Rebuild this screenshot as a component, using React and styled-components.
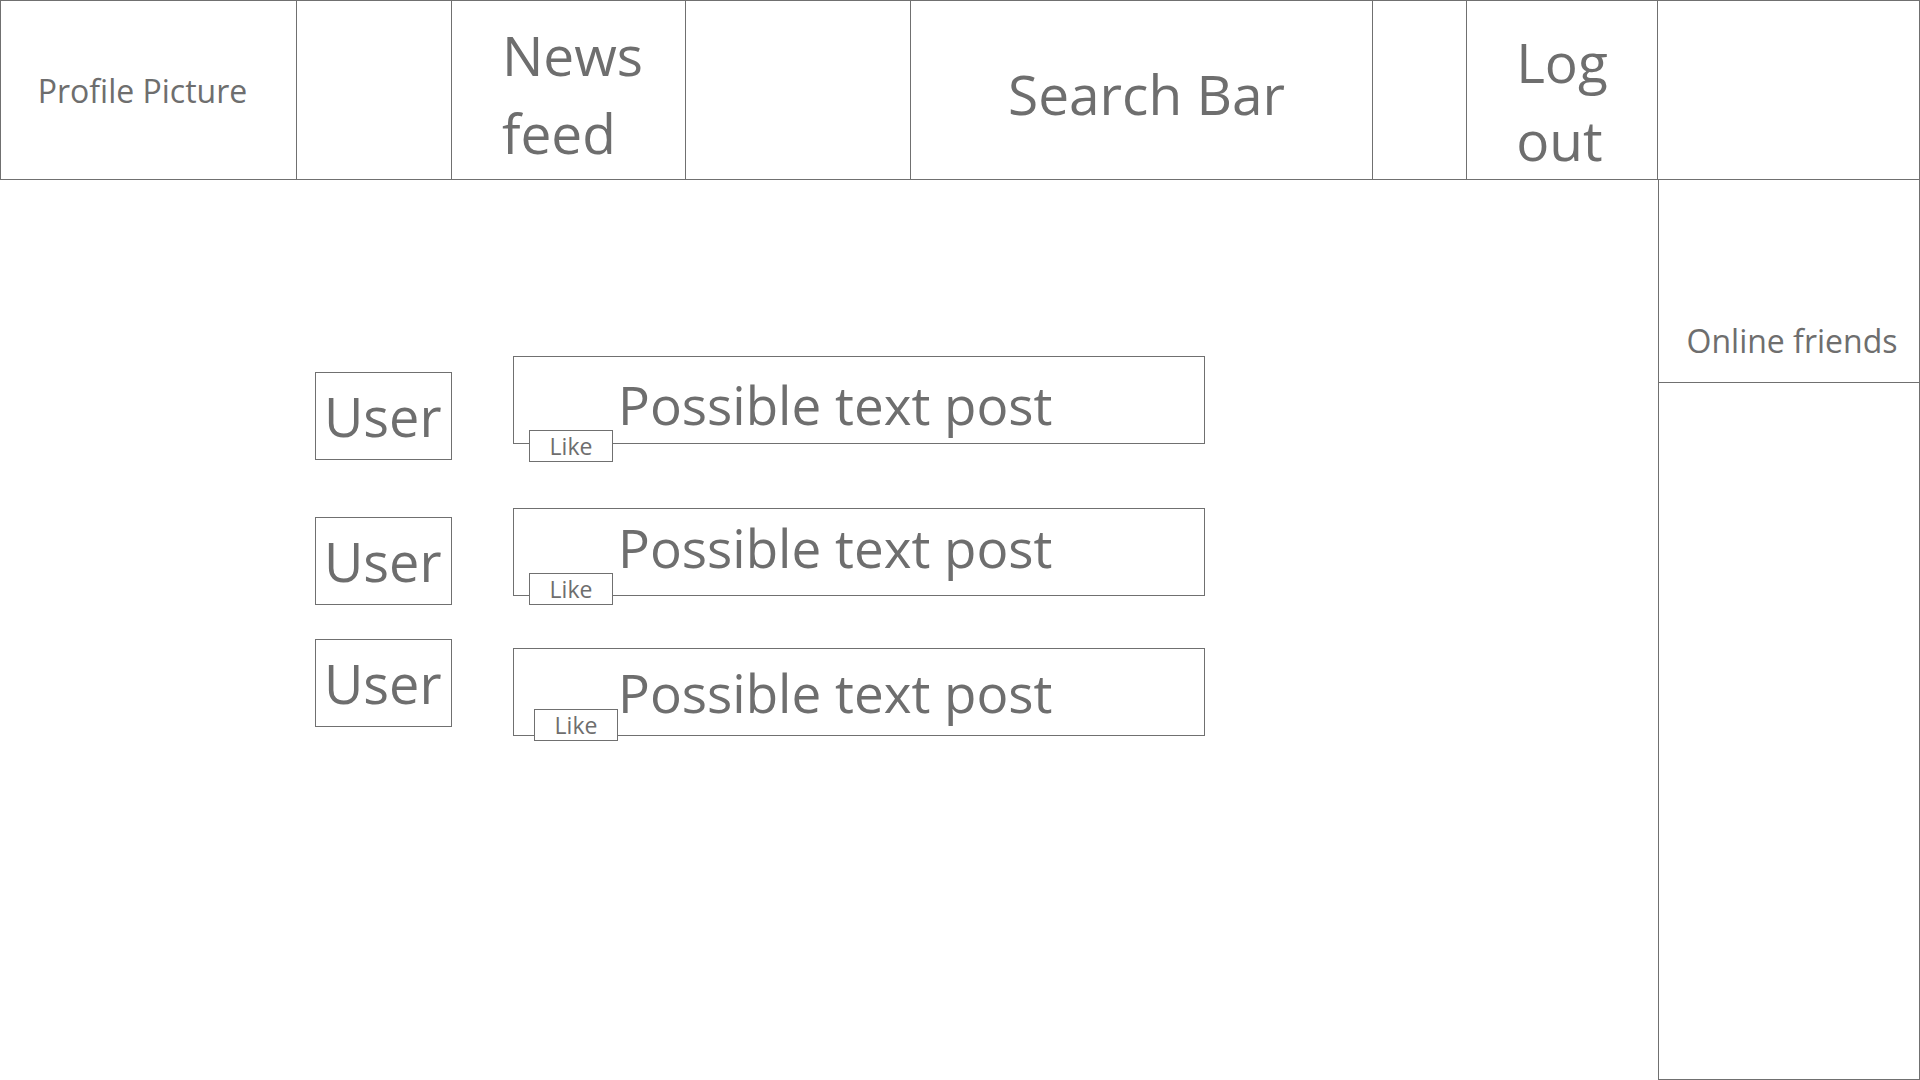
import React from "react";
import styled, { createGlobalStyle } from "styled-components";

const line = "#707070";

const GlobalStyle = createGlobalStyle`
  html, body {
    margin: 0;
    padding: 0;
    background: #ffffff;
  }
  body {
    font-family: "Open Sans", "Noto Sans", sans-serif;
    color: #6e6e6e;
  }
`;

const Page = styled.div`
  width: 1920px;
  height: 1080px;
  display: flex;
  flex-direction: column;
  overflow: hidden;
`;

const Header = styled.header`
  display: flex;
  height: 180px;
  box-sizing: border-box;
  border-top: 1px solid ${line};
  border-bottom: 1px solid ${line};
  border-left: 1px solid ${line};
`;

const Cell = styled.div`
  width: ${(p) => p.$w}px;
  flex: none;
  box-sizing: border-box;
  border-right: 1px solid ${line};
  display: flex;
  justify-content: center;
  align-items: ${(p) => (p.$top !== undefined ? "flex-start" : "center")};
  padding-top: ${(p) => p.$top || 0}px;
  padding-left: ${(p) => p.$pl || 0}px;
  padding-right: ${(p) => p.$pr || 0}px;
`;

const Label = styled.span`
  font-size: ${(p) => p.$size}px;
  margin-top: ${(p) => p.$mt || 0}px;
  white-space: nowrap;
`;

const Stack = styled.span`
  font-size: 55px;
  line-height: 78px;
  width: min-content;
  text-align: left;
`;

const Body = styled.div`
  flex: 1;
  display: flex;
  min-height: 0;
`;

const Main = styled.main`
  flex: 1;
  padding: 176px 0 0 315px;
  box-sizing: border-box;
`;

const Row = styled.div`
  display: flex;
  align-items: flex-start;
  gap: 61px;
  margin-top: ${(p) => p.$mt || 0}px;
`;

const UserBox = styled.div`
  width: 137px;
  height: 88px;
  box-sizing: border-box;
  border: 1px solid ${line};
  margin-top: ${(p) => p.$offset || 0}px;
  display: flex;
  align-items: center;
  padding-left: 8px;
  font-size: 54px;
`;

const PostBox = styled.div`
  position: relative;
  width: 692px;
  height: 88px;
  box-sizing: border-box;
  border: 1px solid ${line};
  margin-top: ${(p) => p.$offset || 0}px;
  display: flex;
  align-items: center;
  padding-left: 104px;
  font-size: 53px;
  white-space: nowrap;
`;

const PostText = styled.span`
  margin-top: ${(p) => p.$shift}px;
`;

const LikeButton = styled.button`
  position: absolute;
  left: ${(p) => p.$left}px;
  bottom: ${(p) => p.$bottom}px;
  width: 84px;
  height: 32px;
  box-sizing: border-box;
  border: 1px solid ${line};
  background: #ffffff;
  color: #6e6e6e;
  font-family: "Open Sans", "Noto Sans", sans-serif;
  font-size: 23px;
  line-height: 1;
  padding: 0;
  display: flex;
  align-items: center;
  justify-content: center;
`;

const Sidebar = styled.aside`
  width: 262px;
  flex: none;
  display: flex;
  flex-direction: column;
  box-sizing: border-box;
  border-left: 1px solid ${line};
  border-right: 1px solid ${line};
  border-bottom: 1px solid ${line};
`;

const FriendsHead = styled.div`
  height: 203px;
  box-sizing: border-box;
  border-bottom: 1px solid ${line};
  display: flex;
  align-items: flex-end;
  justify-content: center;
  padding: 0 0 20px 6px;
  font-size: 32px;
`;

const FriendsList = styled.div`
  flex: 1;
`;

const posts = [
  { mt: 0, user: 16, post: 0, text: 8, like: { left: 15, bottom: -19 } },
  { mt: 48, user: 9, post: 0, text: -9, like: { left: 15, bottom: -10 } },
  { mt: 34, user: 0, post: 9, text: 0, like: { left: 20, bottom: -6 } },
];

export default function App() {
  return (
    <>
      <GlobalStyle />
      <Page>
        <Header>
          <Cell $w={296} $pr={12}>
            <Label $size={32}>Profile Picture</Label>
          </Cell>
          <Cell $w={155} />
          <Cell $w={234} $top={15} $pl={8}>
            <Stack>News feed</Stack>
          </Cell>
          <Cell $w={225} />
          <Cell $w={462} $pl={10}>
            <Label $size={55} $mt={6}>
              Search Bar
            </Label>
          </Cell>
          <Cell $w={94} />
          <Cell $w={191} $top={22}>
            <Stack>Log out</Stack>
          </Cell>
          <Cell $w={262} />
        </Header>
        <Body>
          <Main>
            {posts.map((p, i) => (
              <Row key={i} $mt={p.mt}>
                <UserBox $offset={p.user}>User</UserBox>
                <PostBox $offset={p.post}>
                  <PostText $shift={p.text}>Possible text post</PostText>
                  <LikeButton $left={p.like.left} $bottom={p.like.bottom}>
                    Like
                  </LikeButton>
                </PostBox>
              </Row>
            ))}
          </Main>
          <Sidebar>
            <FriendsHead>Online friends</FriendsHead>
            <FriendsList />
          </Sidebar>
        </Body>
      </Page>
    </>
  );
}
